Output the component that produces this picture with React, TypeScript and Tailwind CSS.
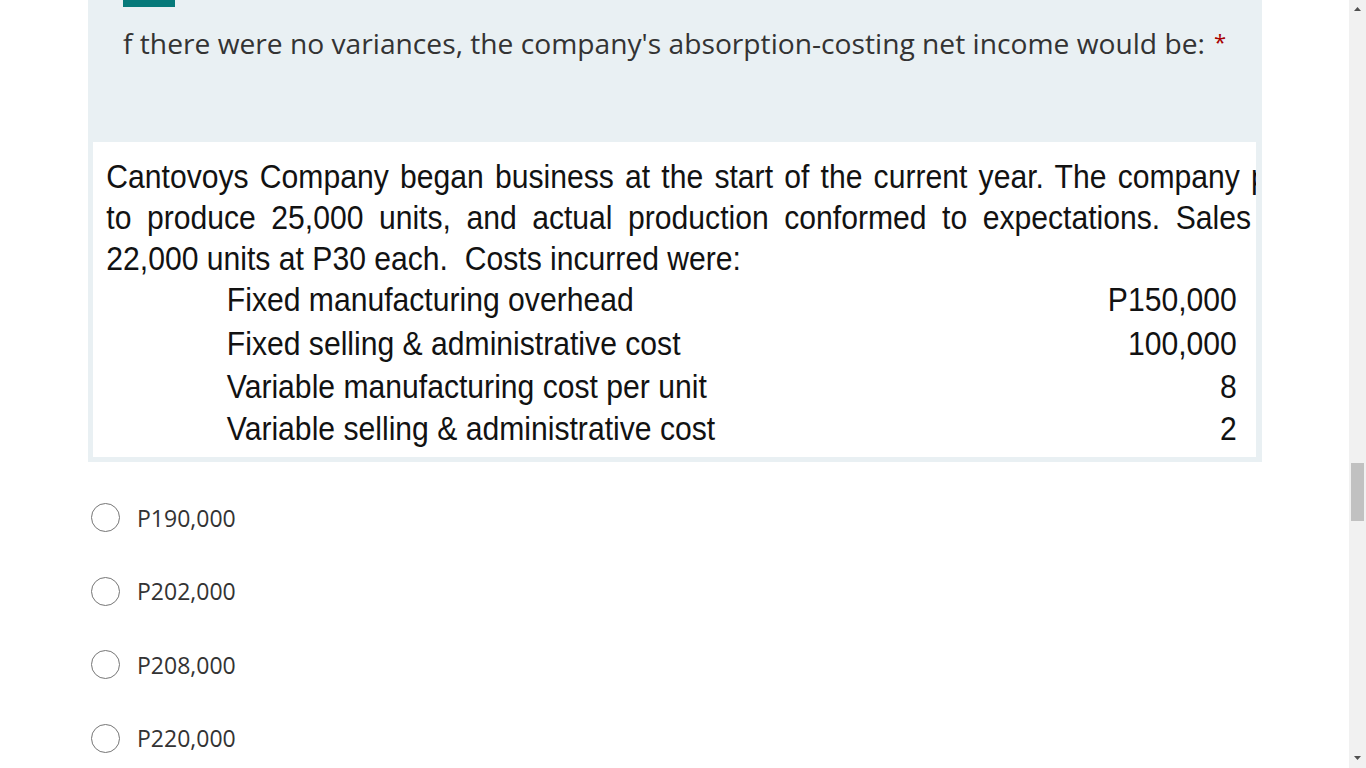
import React from "react";

const options = ["P190,000", "P202,000", "P208,000", "P220,000"];

const rows: { label: string; value: string; h: string }[] = [
  { label: "Fixed manufacturing overhead", value: "P150,000", h: "h-[41px] leading-[41px]" },
  { label: "Fixed selling & administrative cost", value: "100,000", h: "h-[46px] leading-[46px]" },
  { label: "Variable manufacturing cost per unit", value: "8", h: "h-[40px] leading-[40px]" },
  { label: "Variable selling & administrative cost", value: "2", h: "h-[45px] leading-[45px]" },
];

export default function App() {
  return (
    <div className="flex h-[768px] w-[1366px] overflow-hidden bg-white">
      <div className="h-full flex-1 overflow-hidden">
        <div className="ml-[88px] w-[1174px]">
          {/* question header */}
          <div className="h-[142px] bg-[#e9f0f3] pl-[35px]">
            <div className="h-[7px] w-[52px] bg-[#077a7a]" />
            <div className="mt-[17px] flex items-start whitespace-nowrap font-['Open_Sans',sans-serif] text-[28.2px] leading-[38px] text-[#333333]">
              <span>f there were no variances, the company's absorption-costing net income would be:</span>
              <span className="ml-[9px] mt-[2px] text-[22px] leading-[30px] text-[#a80000]">*</span>
            </div>
          </div>

          {/* image panel */}
          <div className="bg-[#e9f0f3] pb-[5px] pl-[5px] pr-[6px]">
            <div className="h-[315px] w-[1163px] overflow-hidden bg-white">
              <div className="w-[1313px] origin-top-left scale-x-[0.886] pl-[15px] pt-[14px] font-['Liberation_Sans',Arial,sans-serif] text-[34px] text-[#121212]">
                <div className="h-[41px] whitespace-nowrap leading-[41px] [word-spacing:3.2px]">
                  Cantovoys Company began business at the start of the current year. The company planned
                </div>
                <div className="h-[41px] w-[1292px] whitespace-nowrap text-justify leading-[41px] [text-align-last:justify]">
                  to produce 25,000 units, and actual production conformed to expectations. Sales
                </div>
                <div className="h-[41px] whitespace-pre leading-[41px]">22,000 units at P30 each.  Costs incurred were:</div>
                <div className="w-[1276px]">
                  {rows.map((r) => (
                    <div key={r.label} className={`flex justify-between whitespace-nowrap ${r.h}`}>
                      <span className="pl-[136px]">{r.label}</span>
                      <span>{r.value}</span>
                    </div>
                  ))}
                </div>
              </div>
            </div>
          </div>

          {/* options */}
          <div className="mt-[19px] flex flex-col">
            {options.map((o) => (
              <div key={o} className="flex h-[73.5px] items-center">
                <div className="ml-[3px] h-[29px] w-[29px] rounded-full border-[1.5px] border-[#767676] bg-white" />
                <span className="ml-[17px] font-['Open_Sans',sans-serif] text-[23px] leading-[30px] text-[#333333]">
                  {o}
                </span>
              </div>
            ))}
          </div>
        </div>
      </div>

      {/* scrollbar */}
      <div className="flex h-full w-[17px] flex-col bg-[#f1f1f1]">
        <div className="flex h-[17px] items-start justify-center pt-[7px]">
          <svg width="7" height="4" viewBox="0 0 7 4">
            <polygon points="3.5,0 7,4 0,4" fill="#505050" />
          </svg>
        </div>
        <div className="h-[446px]" />
        <div className="mx-[2px] h-[58px] bg-[#c1c1c1]" />
        <div className="flex-1" />
        <div className="flex h-[17px] items-start justify-center pt-[5px]">
          <svg width="7" height="4" viewBox="0 0 7 4">
            <polygon points="0,0 7,0 3.5,4" fill="#505050" />
          </svg>
        </div>
      </div>
    </div>
  );
}
